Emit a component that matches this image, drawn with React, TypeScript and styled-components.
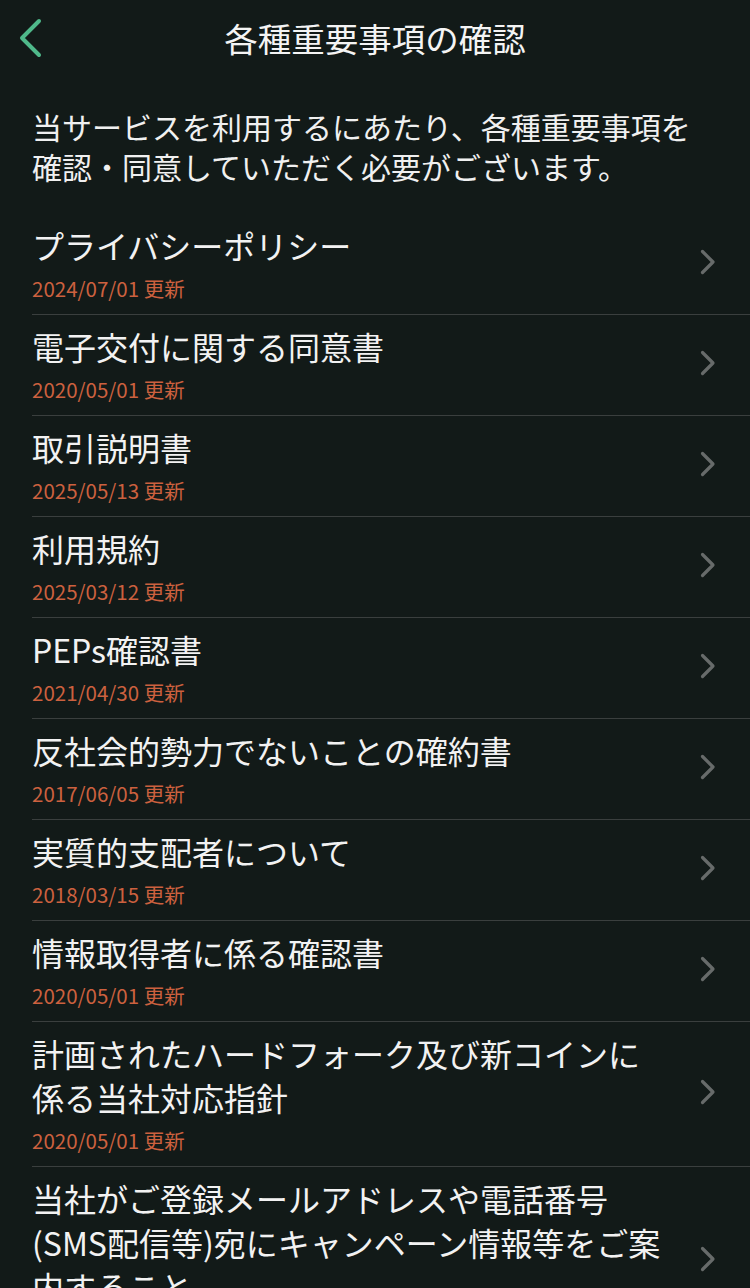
import React from "react";
import styled, { createGlobalStyle } from "styled-components";

const Global = createGlobalStyle`
  html, body { margin: 0; padding: 0; background: #121a18; }
  body { font-family: "Noto Sans CJK JP", "Noto Sans", sans-serif; -webkit-font-smoothing: antialiased; }
`;

const Page = styled.div`
  width: 750px;
  height: 1288px;
  overflow: hidden;
  background: #121a18;
  color: #f2f2f2;
`;

const Header = styled.header`
  position: relative;
  height: 76px;
  display: flex;
  align-items: center;
  justify-content: center;
`;

const BackButton = styled.button`
  position: absolute;
  left: 14px;
  top: 16px;
  width: 32px;
  height: 44px;
  padding: 0;
  border: none;
  background: none;
  display: flex;
  align-items: center;
  justify-content: center;
`;

const Title = styled.h1`
  margin: 0;
  font-size: 33.5px;
  font-weight: 400;
  line-height: 72px;
  color: #f4f4f4;
`;

const Intro = styled.p`
  margin: 0;
  padding: 30px 32px 28px 32px;
  font-size: 30px;
  line-height: 40px;
  color: #f0f0f0;
  white-space: nowrap;
`;

const List = styled.ul`
  list-style: none;
  margin: 0;
  padding: 0 0 0 32px;
`;

const Row = styled.li`
  display: flex;
  align-items: center;
  padding: 9px 34px 14px 0;
  border-bottom: 1px solid #3a3f3e;
`;

const RowText = styled.div`
  flex: 1;
  min-width: 0;
`;

const RowTitle = styled.div`
  font-size: 32px;
  line-height: 44px;
  color: #f2f2f2;
  white-space: nowrap;
`;

const RowDate = styled.div`
  margin-top: 9px;
  font-size: 20.5px;
  line-height: 24px;
  color: #cc613f;
`;

const Chevron = () => (
  <svg width="16" height="26" viewBox="0 0 16 26" fill="none">
    <path d="M2.5 2.5 L13 13 L2.5 23.5" stroke="#676b6a" strokeWidth="3.2" strokeLinecap="round" strokeLinejoin="round" />
  </svg>
);

const BackIcon = () => (
  <svg width="26" height="40" viewBox="0 0 26 40" fill="none">
    <path d="M22 3 L5 20 L22 37" stroke="#4fb98a" strokeWidth="4" strokeLinecap="round" strokeLinejoin="round" />
  </svg>
);

const items: { title: React.ReactNode; date: string }[] = [
  { title: "プライバシーポリシー", date: "2024/07/01" },
  { title: "電子交付に関する同意書", date: "2020/05/01" },
  { title: "取引説明書", date: "2025/05/13" },
  { title: "利用規約", date: "2025/03/12" },
  { title: "PEPs確認書", date: "2021/04/30" },
  { title: "反社会的勢力でないことの確約書", date: "2017/06/05" },
  { title: "実質的支配者について", date: "2018/03/15" },
  { title: "情報取得者に係る確認書", date: "2020/05/01" },
  {
    title: (
      <>
        計画されたハードフォーク及び新コインに
        <br />
        係る当社対応指針
      </>
    ),
    date: "2020/05/01",
  },
  {
    title: (
      <>
        当社がご登録メールアドレスや電話番号
        <br />
        (SMS配信等)宛にキャンペーン情報等をご案
        <br />
        内すること
      </>
    ),
    date: "2020/05/01",
  },
];

export default function App() {
  return (
    <Page>
      <Global />
      <Header>
        <BackButton aria-label="戻る">
          <BackIcon />
        </BackButton>
        <Title>各種重要事項の確認</Title>
      </Header>
      <Intro>
        当サービスを利用するにあたり、各種重要事項を
        <br />
        確認・同意していただく必要がございます。
      </Intro>
      <List>
        {items.map((it, i) => (
          <Row key={i}>
            <RowText>
              <RowTitle>{it.title}</RowTitle>
              <RowDate>{it.date} 更新</RowDate>
            </RowText>
            <Chevron />
          </Row>
        ))}
      </List>
    </Page>
  );
}
